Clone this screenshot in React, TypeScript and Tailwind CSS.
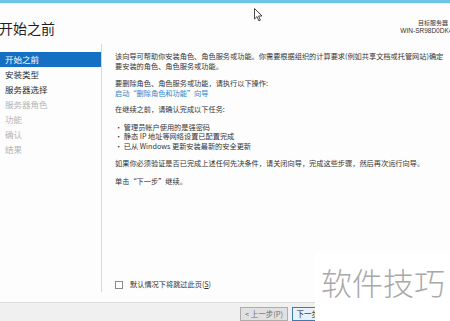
import React from "react";

const font = { fontFamily: '"Microsoft YaHei", "Noto Sans CJK SC", "Liberation Sans", sans-serif' };

const navItems = [
  { label: "开始之前", active: true },
  { label: "安装类型" },
  { label: "服务器选择" },
  { label: "服务器角色", disabled: true },
  { label: "功能", disabled: true },
  { label: "确认", disabled: true },
  { label: "结果", disabled: true },
];

export default function App() {
  return (
    <div
      className="relative w-[450px] h-[321px] overflow-hidden bg-[#fdfdfd] flex flex-col text-[#2b2b2b]"
      style={font}
    >
      {/* top accent bar */}
      <div className="h-[3px] bg-[#6cc4e6]" />
      <div className="h-[1px] bg-[#dff1f9]" />

      {/* header */}
      <div className="h-[41px] flex justify-between">
        <h1 className="text-[14px] leading-none pt-[17px] -ml-[1px] text-[#1f1f1f]">开始之前</h1>
        <div className="flex flex-col items-end pt-[15px] -mr-[6px] text-[6px] leading-[8px] text-[#333]">
          <span className="pr-[8px]">目标服务器</span>
          <span className="whitespace-nowrap text-[6.5px]" style={{ fontFamily: '"Liberation Sans", sans-serif' }}>
            WIN-SR98D0DK44
          </span>
        </div>
      </div>

      {/* body */}
      <div className="h-[261px] flex">
        <nav className="w-[101px] h-[248px] pt-[8px] flex flex-col">
          {navItems.map((item) => (
            <div
              key={item.label}
              className={`h-[15px] leading-[15px] pl-[5px] text-[8.5px] ${
                item.active
                  ? "bg-[#1570c4] text-white"
                  : item.disabled
                  ? "text-[#b4b4b4]"
                  : "text-[#2b2b2b]"
              }`}
            >
              {item.label}
            </div>
          ))}
        </nav>
        <div className="w-[1px] h-[248px] bg-[#d9d9d9]" />

        <div className="flex-1 h-[248px] pl-[13px] pt-[8px] flex flex-col text-[7.2px] leading-[9.5px] text-[#333]">
          <p className="whitespace-nowrap">
            该向导可帮助你安装角色、角色服务或功能。你需要根据组织的计算要求(例如共享文档或托管网站)确定
            <br />
            要安装的角色、角色服务或功能。
          </p>
          <p className="mt-[8px]">
            要删除角色、角色服务或功能，请执行以下操作:
            <br />
            <span className="text-[#2f86c9]">启动“删除角色和功能”向导</span>
          </p>
          <p className="mt-[7px]">在继续之前，请确认完成以下任务:</p>
          <ul className="mt-[8px]">
            <li>• 管理员帐户使用的是强密码</li>
            <li>• 静态 IP 地址等网络设置已配置完成</li>
            <li>• 已从 Windows 更新安装最新的安全更新</li>
          </ul>
          <p className="mt-[8px]">如果你必须验证是否已完成上述任何先决条件，请关闭向导，完成这些步骤，然后再次运行向导。</p>
          <p className="mt-[8px]">单击“下一步”继续。</p>

          <label className="mt-auto mb-[3px] flex items-center gap-[7px] text-[7.2px]">
            <span className="w-[8px] h-[8px] border border-[#8a8a8a] bg-white" />
            <span>
              默认情况下将跳过此页(<span className="underline">S</span>)
            </span>
          </label>
        </div>
      </div>

      {/* footer */}
      <div className="flex-1 border-t border-[#dcdcdc] bg-[#f0f0f0] flex justify-end items-start pt-[4px] pr-[110px] gap-[4px]">
        <button className="w-[48px] h-[14px] border border-[#adadad] bg-[#e1e1e1] text-[7.5px] leading-[12px] text-[#6d6d6d]">
          &lt; 上一步(P)
        </button>
        <button className="w-[48px] h-[14px] border border-[#3d7bad] bg-[#e5f1fb] text-[7.5px] leading-[12px] text-[#222]">
          下一步(N) &gt;
        </button>
      </div>

      {/* mouse cursor */}
      <svg className="absolute left-[254px] top-[8px]" width="9" height="14" viewBox="0 0 9 14">
        <path d="M0.5 0.5 L0.5 11 L3 8.6 L4.8 12.8 L6.4 12.1 L4.6 8 L8 8 Z" fill="white" stroke="#333" strokeWidth="0.9" />
      </svg>

      {/* watermark */}
      <div className="absolute left-[315px] top-[253px] w-[135px] h-[68px] bg-white flex items-start pl-[6px] pt-[13px]">
        <span className="text-[31px] leading-none font-light text-[#a9a9a9]">软件技巧</span>
      </div>
    </div>
  );
}
